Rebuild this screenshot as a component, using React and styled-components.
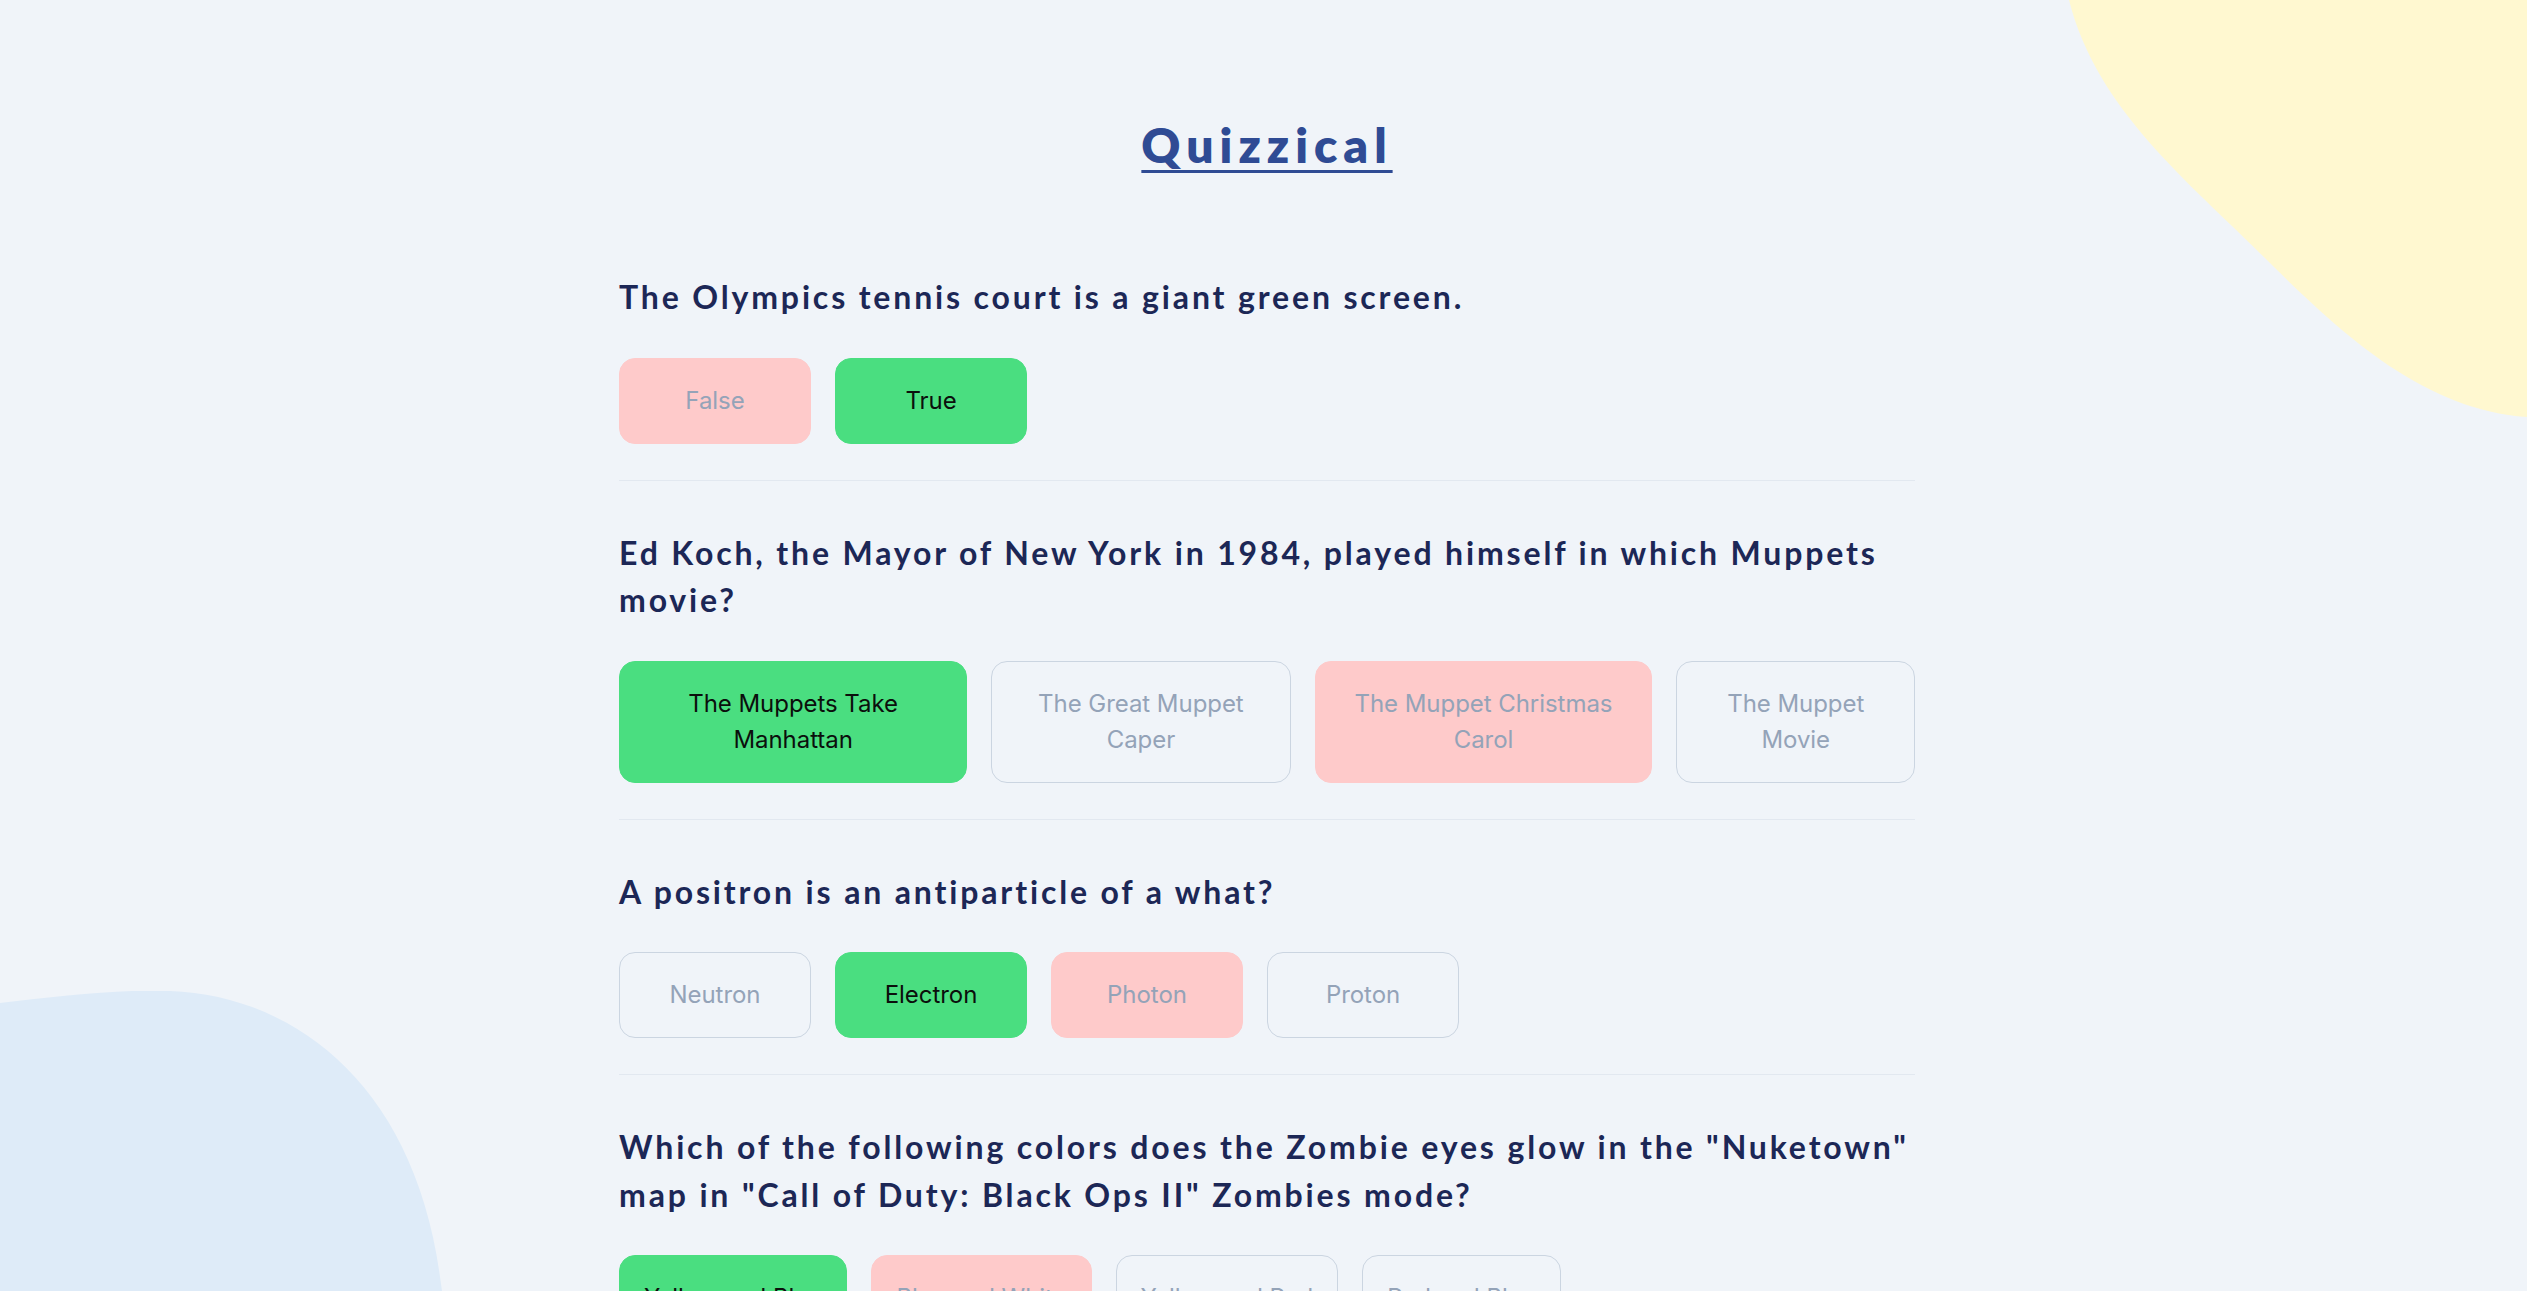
import styled, { createGlobalStyle } from 'styled-components';

const GlobalStyle = createGlobalStyle`
html {
  scrollbar-width: none;
}
body {
  margin: 0;
  background: #f0f4f9;
  font-family: "Lato", "Noto Sans", sans-serif;
}
* {
  box-sizing: border-box;
}
`;

const Page = styled.main`
position: relative;
min-height: 100vh;
padding: 121px 0 80px 7px;
overflow: hidden;
`;

const Blob = styled.svg`
position: fixed;
z-index: 0;
pointer-events: none;
${props => props.$corner === 'top' ? 'top: 0; right: 0;' : 'bottom: 0; left: 0;'}
`;

const Content = styled.div`
position: relative;
z-index: 1;
max-width: 1296px;
margin: 0 auto;
display: flex;
flex-direction: column;
`;

const Title = styled.h1`
margin: 0 0 104px;
text-align: center;
font-size: 48px;
line-height: 1;
font-weight: 800;
letter-spacing: 6px;
color: #2f4b94;
text-decoration: underline;
text-decoration-thickness: 3px;
text-underline-offset: 7px;
`;

const Question = styled.section`
padding-bottom: 36px;
border-bottom: 1px solid #e2e8f0;
& + & {
  padding-top: 48px;
}
`;

const QuestionText = styled.h2`
margin: 0 0 37px;
font-size: 32px;
line-height: 47.5px;
font-weight: 700;
letter-spacing: 2.85px;
color: #1c2756;
`;

const Options = styled.div`
display: flex;
gap: 24px;
`;

const colors = {
    correct: { bg: '#4ade80', border: '#4ade80', text: '#0b0f0c' },
    wrong: { bg: '#fecaca', border: '#fecaca', text: '#94a3b8' },
    idle: { bg: 'transparent', border: '#cbd5e1', text: '#94a3b8' },
};

const Option = styled.button`
flex: 0 1 auto;
min-width: 192px;
padding: 24px;
border-radius: 16px;
border: 1px solid ${props => colors[props.$state].border};
background: ${props => colors[props.$state].bg};
color: ${props => colors[props.$state].text};
font-family: "Inter", "Liberation Sans", sans-serif;
font-size: 24px;
line-height: 36px;
font-weight: 400;
letter-spacing: -0.05px;
text-align: center;
cursor: pointer;
`;

const quiz = [
    {
        q: 'The Olympics tennis court is a giant green screen.',
        answers: [['False', 'wrong'], ['True', 'correct']],
    },
    {
        q: 'Ed Koch, the Mayor of New York in 1984, played himself in which Muppets movie?',
        answers: [
            ['The Muppets Take Manhattan', 'correct'],
            ['The Great Muppet Caper', 'idle'],
            ['The Muppet Christmas Carol', 'wrong'],
            ['The Muppet Movie', 'idle'],
        ],
    },
    {
        q: 'A positron is an antiparticle of a what?',
        answers: [['Neutron', 'idle'], ['Electron', 'correct'], ['Photon', 'wrong'], ['Proton', 'idle']],
    },
    {
        q: 'Which of the following colors does the Zombie eyes glow in the "Nuketown" map in "Call of Duty: Black Ops II" Zombies mode?',
        answers: [
            ['Yellow and Blue', 'correct'],
            ['Blue and White', 'wrong'],
            ['Yellow and Red', 'idle'],
            ['Red and Blue', 'idle'],
        ],
    },
    {
        q: 'What is the capital of Australia?',
        answers: [['Sydney', 'idle'], ['Canberra', 'correct'], ['Melbourne', 'idle'], ['Perth', 'idle']],
    },
];

export default function App() {
    return (
        <>
            <GlobalStyle />
            <Page>
                <Blob $corner="top" width="460" height="420" viewBox="0 0 460 420">
                    <path d="M2 0 C 30 110, 120 180, 200 260 C 280 340, 360 410, 460 417 L 460 0 Z" fill="#fff8d0" />
                </Blob>
                <Blob $corner="bottom" width="450" height="300" viewBox="0 0 450 300">
                    <path d="M0 12 C 60 5, 120 -2, 170 0 C 300 5, 420 100, 442 300 L 0 300 Z" fill="#deebf8" />
                </Blob>
                <Content>
                    <Title>Quizzical</Title>
                    {quiz.map((item, i) => (
                        <Question key={i}>
                            <QuestionText>{item.q}</QuestionText>
                            <Options>
                                {item.answers.map(([label, state]) => (
                                    <Option key={label} $state={state}>{label}</Option>
                                ))}
                            </Options>
                        </Question>
                    ))}
                </Content>
            </Page>
        </>
    );
}
